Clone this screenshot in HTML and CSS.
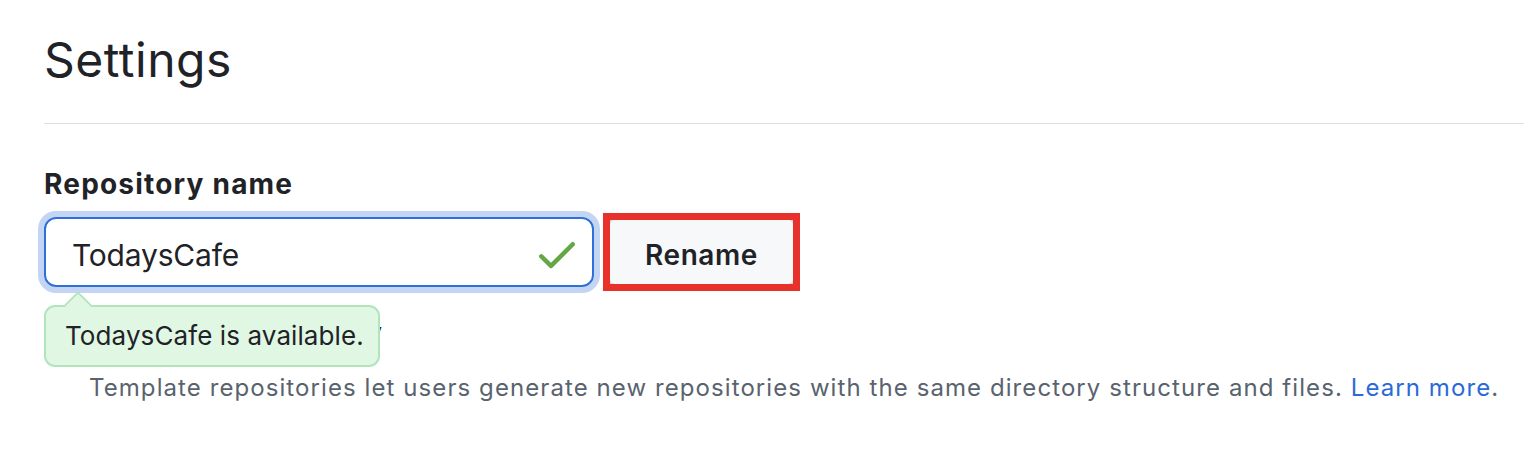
FILE: index.html
```html
<!DOCTYPE html>
<html>
<head>
<meta charset="utf-8">
<link rel="stylesheet" href="styles.css">
</head>
<body>
<div class="page">
  <div class="subhead">
    <h2 class="subhead-title">Settings</h2>
  </div>
  <div class="form-group">
    <label class="field-label" for="repo">Repository name</label>
    <div class="name-row">
      <div class="input-wrap">
        <div class="input">
          <span class="input-text">TodaysCafe</span>
          <svg class="check" width="48" height="48" viewBox="0 0 16 16"><path fill="#63a844" d="M13.78 4.22a.75.75 0 0 1 0 1.06l-7.25 7.25a.75.75 0 0 1-1.06 0L2.22 9.28a.75.75 0 0 1 1.06-1.06L6 10.94l6.72-6.72a.75.75 0 0 1 1.06 0Z"/></svg>
        </div>
        <div class="tooltip">
          <span class="tooltip-arrow"></span>
          TodaysCafe is available.
        </div>
      </div>
      <div class="highlight">
        <button class="btn">Rename</button>
      </div>
    </div>
  </div>
  <div class="checkbox-row">
    <span class="checkbox"></span>
    <span class="checkbox-label">Template repository</span>
  </div>
  <p class="note">Template repositories let users generate new repositories with the same directory structure and files. <a class="link" href="#">Learn more</a>.</p>
</div>
</body>
</html>
```

FILE: styles.css
```css
* { box-sizing: border-box; }
html, body { margin: 0; background: #ffffff; }
body {
  font-family: Inter, "Noto Sans", "Liberation Sans", sans-serif;
  color: #1f2328;
}
.page {
  padding-left: 44px;
}
.subhead {
  padding-top: 30px;
  padding-bottom: 33px;
  border-bottom: 1px solid #d8dee4;
}
.subhead-title {
  margin: 0;
  font-size: 48px;
  font-weight: 400;
  line-height: 60px;
  letter-spacing: 0.5px;
}
.form-group {
  margin-top: 40px;
}
.field-label {
  display: block;
  font-size: 28px;
  font-weight: 700;
  line-height: 40px;
  letter-spacing: 1.2px;
}
.name-row {
  margin-top: 9px;
  display: flex;
  align-items: center;
}
.input-wrap {
  position: relative;
}
.input {
  width: 550px;
  height: 70px;
  border: 2px solid #2f6fd8;
  border-radius: 12px;
  box-shadow: 0 0 0 6px #c3d5f2;
  display: flex;
  align-items: center;
  padding-left: 26px;
  padding-top: 6px;
  position: relative;
}
.input-text {
  font-size: 30px;
  letter-spacing: -0.2px;
}
.check {
  position: absolute;
  right: 11px;
  top: 11px;
}
.tooltip {
  position: absolute;
  left: 0;
  top: calc(100% + 18px);
  width: 336px;
  height: 62px;
  background: #e0f8e3;
  border: 2px solid #b3e4bb;
  border-radius: 11px;
  font-size: 26px;
  line-height: 58px;
  padding-left: 19px;
  letter-spacing: 0.1px;
  z-index: 2;
  white-space: nowrap;
}
.tooltip-arrow {
  position: absolute;
  left: 22px;
  top: -12px;
  width: 20px;
  height: 20px;
  background: #e0f8e3;
  border-left: 2px solid #b3e4bb;
  border-top: 2px solid #b3e4bb;
  transform: rotate(45deg);
  border-top-left-radius: 3px;
}
.highlight {
  margin-left: 9px;
  border: 7px solid #e8312a;
  background: #d0d7de;
  display: flex;
}
.btn {
  width: 183px;
  height: 64px;
  border: none;
  border-radius: 5px;
  background: #f6f8fa;
  font-family: Inter, "Noto Sans", "Liberation Sans", sans-serif;
  font-size: 28px;
  font-weight: 600;
  letter-spacing: 0.6px;
  color: #1f2328;
  padding: 6px 0 0 0;
}
.checkbox-row {
  margin-top: 22px;
  display: flex;
  align-items: center;
  height: 40px;
}
.checkbox {
  width: 26px;
  height: 26px;
  border: 2px solid #57606a;
  border-radius: 6px;
}
.checkbox-label {
  margin-left: 19px;
  font-size: 28px;
  font-weight: 700;
  line-height: 40px;
  letter-spacing: 1px;
}
.note {
  margin: 17px 0 0 0;
  padding-left: 45px;
  font-size: 24px;
  line-height: 36px;
  letter-spacing: 1.08px;
  color: #59636e;
}
.link {
  color: #2a6ad8;
  text-decoration: none;
}
```
